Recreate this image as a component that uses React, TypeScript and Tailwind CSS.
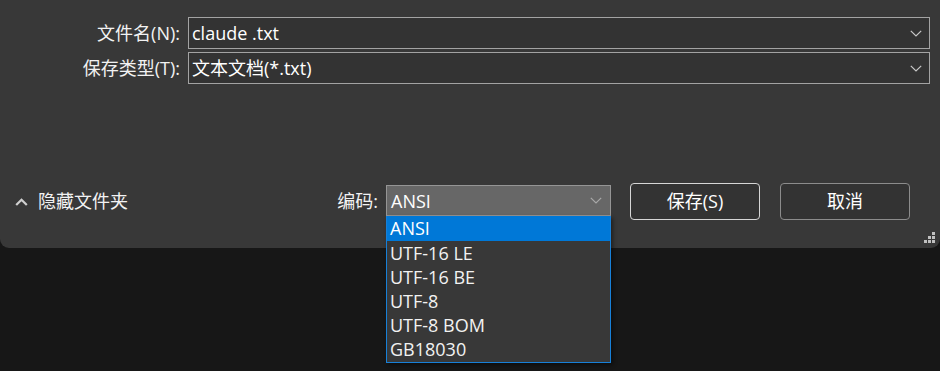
import React from "react";

const font = { fontFamily: '"Open Sans", "Noto Sans CJK SC", sans-serif' };

function Chevron({ className }: { className?: string }) {
  return (
    <svg width="12" height="7" viewBox="0 0 12 7" className={className}>
      <path d="M0.8 0.8 L6 6 L11.2 0.8" fill="none" stroke="currentColor" strokeWidth="1.2" />
    </svg>
  );
}

function Field({ value }: { value: string }) {
  return (
    <div className="flex h-[32px] items-center border border-[#a3a3a3] bg-[#333333] pl-[3px] pr-[7px]">
      <span className="flex-1 text-[18px] leading-none text-white">{value}</span>
      <Chevron className="text-[#c8c8c8]" />
    </div>
  );
}

const items = ["ANSI", "UTF-16 LE", "UTF-16 BE", "UTF-8", "UTF-8 BOM", "GB18030"];

export default function App() {
  return (
    <div className="relative h-[371px] w-[940px] overflow-hidden bg-[#171717]" style={font}>
      <div className="relative flex h-[248px] w-full flex-col rounded-b-[9px] bg-[#383838]">
        <div className="grid grid-cols-[180px_1fr] gap-x-[8px] gap-y-[3px] pr-[10px] pt-[17px]">
          <div className="flex h-[32px] items-center justify-end text-[18px] text-[#f2f2f2]">文件名(N):</div>
          <Field value="claude .txt" />
          <div className="flex h-[32px] items-center justify-end text-[18px] text-[#f2f2f2]">保存类型(T):</div>
          <Field value="文本文档(*.txt)" />
        </div>

        <div className="mt-[99px] flex h-[37px] items-center pr-[30px]">
          <div className="flex items-center pl-[15px] text-[18px] text-[#f2f2f2]">
            <svg width="13" height="8" viewBox="0 0 13 8" className="text-[#d0d0d0]">
              <path d="M1.2 7 L6.5 1.7 L11.8 7" fill="none" stroke="currentColor" strokeWidth="2.2" />
            </svg>
            <span className="ml-[10px]">隐藏文件夹</span>
          </div>
          <div className="ml-auto flex items-center">
            <span className="text-[18px] text-[#f2f2f2]">编码:</span>
            <div className="relative -mt-[2px] ml-[8px] w-[225px]">
              <div className="flex h-[31px] items-center border border-[#959595] bg-[#676767] pl-[4px] pr-[8px]">
                <span className="flex-1 text-[18px] leading-none text-white">ANSI</span>
                <Chevron className="text-[#a8a8a8]" />
              </div>
              <div className="absolute left-0 top-[31px] z-10 w-[225px] border border-t-0 border-[#1780d8] bg-[#383838] pb-[1px] shadow-[2px_2px_4px_rgba(0,0,0,0.45)]">
                {items.map((it, i) => (
                  <div
                    key={it}
                    className={
                      i === 0
                        ? "flex h-[25px] items-center bg-[#0078d7] pb-[1px] pl-[3px] text-[18px] leading-none text-white"
                        : "flex h-[24px] items-center pb-[1px] pl-[3px] text-[18px] leading-none text-[#f2f2f2]"
                    }
                  >
                    {it}
                  </div>
                ))}
              </div>
            </div>
            <button className="ml-[19px] flex h-[37px] w-[130px] items-center justify-center rounded-[4px] border border-[#d6d6d6] bg-[#333333] text-[18px] text-white">
              保存(S)
            </button>
            <button className="ml-[20px] flex h-[37px] w-[130px] items-center justify-center rounded-[4px] border border-[#8c8c8c] bg-[#333333] text-[18px] text-white">
              取消
            </button>
          </div>
        </div>

        <div className="absolute bottom-[5px] right-[5px] grid grid-cols-3 gap-[1px]">
          <span className="h-[3px] w-[3px]" />
          <span className="h-[3px] w-[3px]" />
          <span className="h-[3px] w-[3px] bg-[#c0c0c0]" />
          <span className="h-[3px] w-[3px]" />
          <span className="h-[3px] w-[3px] bg-[#c0c0c0]" />
          <span className="h-[3px] w-[3px] bg-[#c0c0c0]" />
          <span className="h-[3px] w-[3px] bg-[#c0c0c0]" />
          <span className="h-[3px] w-[3px] bg-[#c0c0c0]" />
          <span className="h-[3px] w-[3px] bg-[#c0c0c0]" />
        </div>
      </div>
    </div>
  );
}
